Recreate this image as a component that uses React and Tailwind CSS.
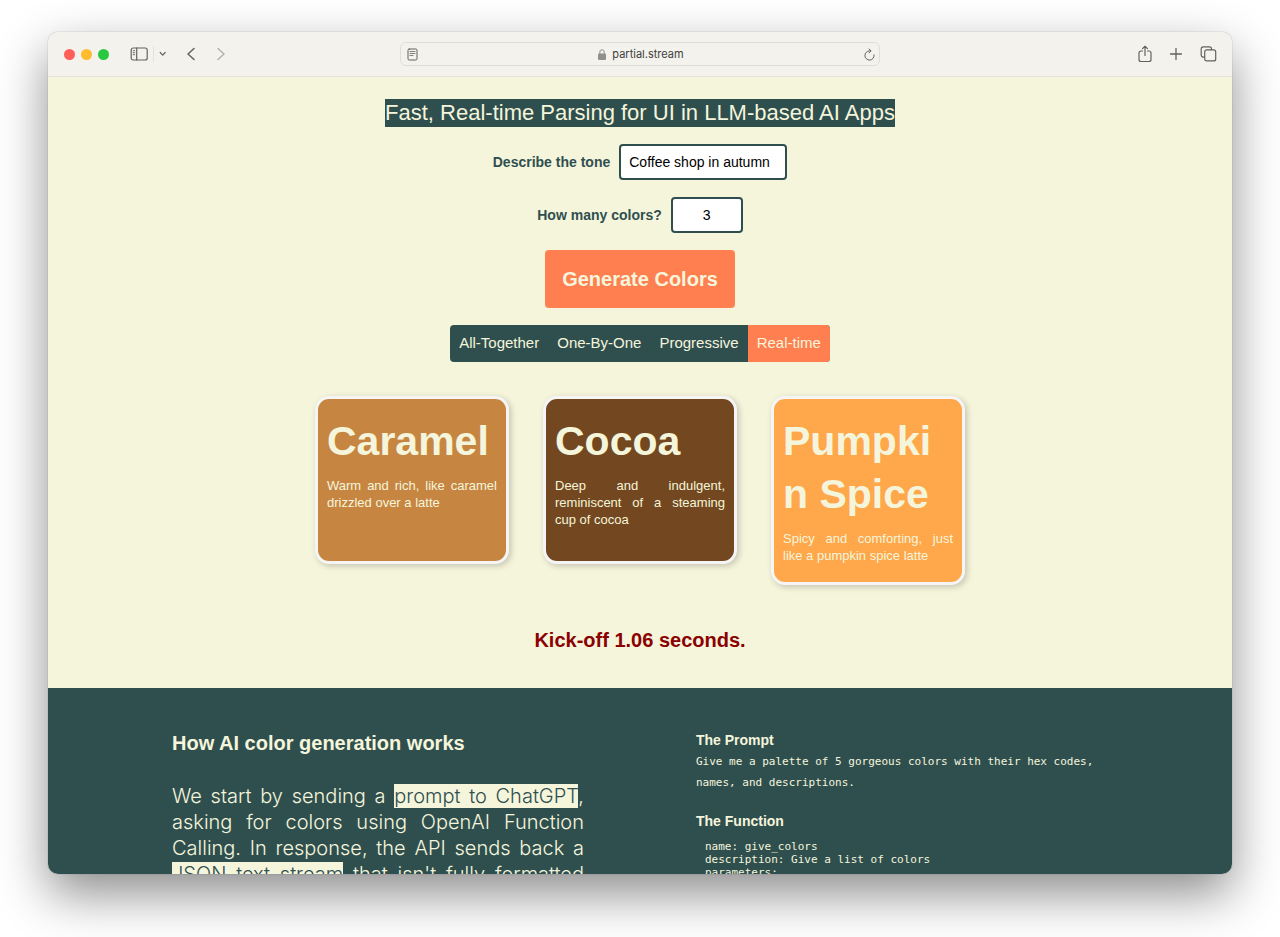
const modes = ["All-Together", "One-By-One", "Progressive", "Real-time"];

const colors = [
  {
    name: "Caramel",
    description: "Warm and rich, like caramel drizzled over a latte",
    background: "bg-[#c68642]",
  },
  {
    name: "Cocoa",
    description: "Deep and indulgent, reminiscent of a steaming cup of cocoa",
    background: "bg-[#734820]",
  },
  {
    name: "Pumpkin Spice",
    description: "Spicy and comforting, just like a pumpkin spice latte",
    background: "bg-[#ffa74b]",
  },
];

function Icon({ width, height, children, className = "" }) {
  return (
    <svg
      width={width}
      height={height}
      viewBox={`0 0 ${width} ${height}`}
      fill="none"
      stroke="currentColor"
      strokeLinecap="round"
      strokeLinejoin="round"
      aria-hidden="true"
      className={className}
    >
      {children}
    </svg>
  );
}

function Toolbar() {
  return (
    <header className="grid h-[45px] shrink-0 grid-cols-[1fr_minmax(0,480px)_1fr] items-center border-b border-[#e3e2d8] bg-[#f3f2ed] text-[#63625e]">
      <div className="flex items-center pl-4">
        <div className="flex gap-[6px]">
          <span className="size-[11px] rounded-full bg-[#ff5f57]" />
          <span className="size-[11px] rounded-full bg-[#febc2e]" />
          <span className="size-[11px] rounded-full bg-[#28c840]" />
        </div>
        <button type="button" aria-label="Toggle sidebar" className="ml-[21px]">
          <Icon width={18} height={14}>
            <rect x="1.200" y="1" width="16" height="12" rx="2" strokeWidth="1.2" />
            <path d="M6.700 1v12" strokeWidth="1.2" />
            <path d="M3.200 3.700h1.500M3.200 5.700h1.500M3.200 7.700h1.500" strokeWidth="0.9" />
          </Icon>
        </button>
        <span className="ml-[5px] h-4 w-px bg-[#e4e3de]" />
        <button type="button" aria-label="Tab groups" className="ml-[5px]">
          <Icon width={8} height={6}>
            <path d="M1.200 1.500 3.700 4.200l2.500-2.700" strokeWidth="1.2" />
          </Icon>
        </button>
        <button type="button" aria-label="Back" className="ml-[19px]">
          <Icon width={10} height={14}>
            <path d="M8 1.500 2 7l6 5.500" strokeWidth="1.5" />
          </Icon>
        </button>
        <button type="button" aria-label="Forward" className="ml-5 text-[#b3b2ae]">
          <Icon width={10} height={14}>
            <path d="m2 1.500 6 5.500-6 5.500" strokeWidth="1.5" />
          </Icon>
        </button>
      </div>

      <div className="flex h-6 items-center rounded-[6px] border border-[#dfded9] pr-1 pl-[6px]">
        <button type="button" aria-label="Show reader">
          <Icon width={11} height={13}>
            <rect x="1" y="1" width="9" height="11" rx="1.200" />
            <path d="M3 3.500h5M3 5.500h5M3 7.500h3" strokeWidth="0.8" />
          </Icon>
        </button>
        <div className="flex flex-1 items-center justify-center gap-[6px]">
          <svg width="8" height="11" viewBox="0 0 8 11" aria-hidden="true" className="text-[#91908c]">
            <rect y="4.500" width="8" height="6.500" rx="1.200" fill="currentColor" />
            <path d="M1.800 5V3a2.200 2.200 0 0 1 4.400 0v2" fill="none" stroke="currentColor" />
          </svg>
          <span className="font-['Inter',sans-serif] text-[11px] leading-4 text-[#41403d]">partial.stream</span>
        </div>
        <button type="button" aria-label="Reload">
          <Icon width={11} height={13}>
            <path d="M10.100 7A4.600 4.600 0 1 1 5.500 2.900h1.300" />
            <path d="M5 1l2 1.900-2 2" />
          </Icon>
        </button>
      </div>

      <div className="flex items-center justify-end gap-[17px] pr-[15px]">
        <button type="button" aria-label="Share">
          <Icon width={14} height={18}>
            <path d="M4.500 6H3a2 2 0 0 0-2 2v6.500a2 2 0 0 0 2 2h8a2 2 0 0 0 2-2V8a2 2 0 0 0-2-2H9.500" strokeWidth="1.2" />
            <path d="M7 10.500V1.200M4.500 3.600 7 1.200l2.500 2.400" strokeWidth="1.2" />
          </Icon>
        </button>
        <button type="button" aria-label="New tab">
          <Icon width={14} height={14}>
            <path d="M7 1.500v11M1.500 7h11" strokeWidth="1.3" />
          </Icon>
        </button>
        <button type="button" aria-label="Show all tabs">
          <Icon width={17} height={16}>
            <rect x="4.700" y="3.900" width="11" height="11" rx="2" strokeWidth="1.2" />
            <path d="M4.200 11.100H3.200a2 2 0 0 1-2-2V2.900a2 2 0 0 1 2-2H9.500a2 2 0 0 1 2 2v.5" strokeWidth="1.2" />
          </Icon>
        </button>
      </div>
    </header>
  );
}

function ColorCard({ name, description, background }) {
  return (
    <article
      className={`min-h-[168px] w-[194px] rounded-[14px] border-[3px] border-[#f5f5f5] px-[9px] pt-4 pb-[18px] shadow-[2px_2px_6px_rgba(0,0,0,0.2)] ${background}`}
    >
      <h2 className="text-[41px] leading-[53px] font-bold break-all">{name}</h2>
      <p className="mt-[9px] text-justify text-[13px] leading-[17px]">{description}</p>
    </article>
  );
}

function Mark({ children }) {
  return <mark className="bg-[#f5f5dc] text-[#2f4f4f]">{children}</mark>;
}

export default function App() {
  return (
    <div className="flex h-screen flex-col bg-white px-12 pt-8 pb-[63px] font-['Liberation_Sans',Arial,sans-serif]">
      <div className="flex min-h-0 flex-1 flex-col overflow-hidden rounded-[10px] shadow-[0_0_1px_rgba(0,0,0,0.5),0_20px_50px_rgba(0,0,0,0.45)]">
        <Toolbar />
        <main className="min-h-0 flex-1 overflow-hidden bg-[#f5f5dc] text-[#f5f5dc]">
          <section className="flex flex-col items-center pt-[22px] pb-[35px]">
            <h1 className="bg-[#2f4f4f] text-[22px] leading-7">
              Fast, Real-time Parsing for UI in LLM-based AI Apps
            </h1>
            <form className="mt-[17px] flex flex-col items-center gap-[17px]" onSubmit={(e) => e.preventDefault()}>
              <div className="flex items-center gap-[9px]">
                <label htmlFor="tone" className="text-[14px] font-bold text-[#2f4f4f]">Describe the tone</label>
                <input
                  id="tone"
                  type="text"
                  defaultValue="Coffee shop in autumn"
                  className="h-9 w-[168px] rounded-[4px] border-2 border-[#2f4f4f] bg-white px-2 text-[14px] text-black"
                />
              </div>
              <div className="flex items-center gap-[9px]">
                <label htmlFor="count" className="text-[14px] font-bold text-[#2f4f4f]">How many colors?</label>
                <input
                  id="count"
                  type="text"
                  inputMode="numeric"
                  defaultValue="3"
                  className="h-9 w-[72px] rounded-[4px] border-2 border-[#2f4f4f] bg-white px-2 text-center text-[14px] text-black"
                />
              </div>
              <button type="submit" className="h-[58px] rounded-[4px] bg-[#ff7f50] px-[17px] text-[20px] font-bold">
                Generate Colors
              </button>
              <div className="flex overflow-hidden rounded-[4px] bg-[#2f4f4f]">
                {modes.map((mode) => (
                  <button
                    key={mode}
                    type="button"
                    aria-pressed={mode === "Real-time"}
                    className="h-[37px] px-[9px] text-[15px] aria-pressed:bg-[#ff7f50]"
                  >
                    {mode}
                  </button>
                ))}
              </div>
            </form>
            <div className="mt-[34px] flex items-start gap-[34px]">
              {colors.map((color) => (
                <ColorCard key={color.name} {...color} />
              ))}
            </div>
            <p className="mt-[42px] text-[20px] leading-[26px] font-bold text-[#8b0000]">Kick-off 1.06 seconds.</p>
          </section>

          <section className="grid grid-cols-2 gap-[112px] bg-[#2f4f4f] px-[124px] pt-[42px] pb-12">
            <div>
              <h2 className="text-[20px] leading-[26px] font-bold">How AI color generation works</h2>
              <p className="mt-[27px] text-justify font-['Inter','Liberation_Sans',sans-serif] text-[20px] leading-[26px] font-light [text-align-last:justify]">
                We start by sending a <Mark>prompt to ChatGPT</Mark>, asking for colors using OpenAI Function
                Calling. In response, the API sends back a <Mark>JSON text stream</Mark> that isn't fully formatted
              </p>
            </div>
            <div>
              <h3 className="text-[14px] leading-[21px] font-bold">The Prompt</h3>
              <p className="font-['DejaVu_Sans_Mono',monospace] text-[11px] leading-[21px]">
                Give me a palette of 5 gorgeous colors with their hex codes, names, and descriptions.
              </p>
              <h3 className="mt-[18px] text-[14px] leading-[21px] font-bold">The Function</h3>
              <pre className="mt-2 ml-[9px] font-['DejaVu_Sans_Mono',monospace] text-[11px] leading-[13px]">
                {"name: give_colors\ndescription: Give a list of colors\nparameters:"}
              </pre>
            </div>
          </section>
        </main>
      </div>
    </div>
  );
}
